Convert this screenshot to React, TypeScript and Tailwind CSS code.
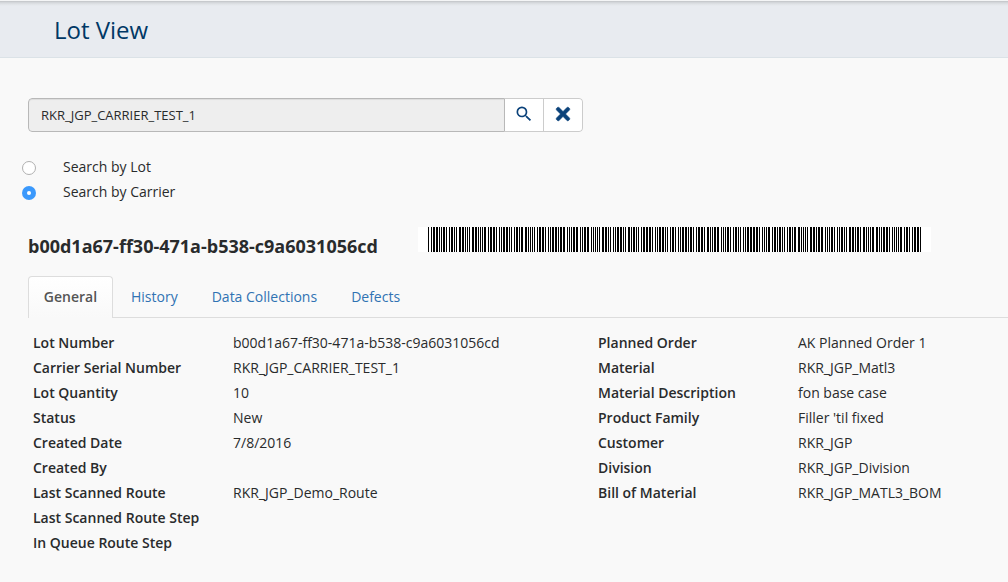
import { useState } from "react";
import { FaTimes } from "react-icons/fa";
import { MdSearch } from "react-icons/md";

const CODE39: Record<string, string> = {
  "0": "nnnwwnwnn",
  "1": "wnnwnnnnw",
  "2": "nnwwnnnnw",
  "3": "wnwwnnnnn",
  "4": "nnnwwnnnw",
  "5": "wnnwwnnnn",
  "6": "nnwwwnnnn",
  "7": "nnnwnnwnw",
  "8": "wnnwnnwnn",
  "9": "nnwwnnwnn",
  A: "wnnnnwnnw",
  B: "nnwnnwnnw",
  C: "wnwnnwnnn",
  D: "nnnnwwnnw",
  E: "wnnnwwnnn",
  F: "nnwnwwnnn",
  "-": "nwnnnnwnw",
  "*": "nwnnwnwnn",
};

function Barcode({ value }: { value: string }) {
  const bars: { x: number; w: number }[] = [];
  let x = 10;
  for (const ch of `*${value.toUpperCase()}*`) {
    CODE39[ch].split("").forEach((size, i) => {
      const w = size === "w" ? 2 : 1;
      if (i % 2 === 0) bars.push({ x, w });
      x += w;
    });
    x += 1;
  }
  return (
    <svg width={x + 9} height={25} className="block shrink-0 bg-white" shapeRendering="crispEdges">
      {bars.map((b) => (
        <rect key={b.x} x={b.x} y={0} width={b.w} height={25} fill="#000" />
      ))}
    </svg>
  );
}

function Radio({ label, checked, onChange }: { label: string; checked: boolean; onChange: () => void }) {
  return (
    <label className="flex h-[25px] items-center">
      <input type="radio" name="search" checked={checked} onChange={onChange} className="peer sr-only" />
      <span
        className={
          checked
            ? "mt-[3px] flex size-[14px] items-center justify-center rounded-full bg-[#3b99fc]"
            : "mt-[3px] size-[14px] rounded-full border border-[#b0b0b0] bg-white"
        }
      >
        {checked && <span className="size-1 rounded-full bg-white" />}
      </span>
      <span className="ml-[27px]">{label}</span>
    </label>
  );
}

type Row = [string, string];

function Details({ rows }: { rows: Row[] }) {
  return (
    <dl className="w-[565px] shrink-0">
      {rows.map(([k, v]) => (
        <div key={k} className="flex h-[25px] items-center whitespace-nowrap">
          <dt className="w-[200px] shrink-0 font-semibold">{k}</dt>
          <dd>{v}</dd>
        </div>
      ))}
    </dl>
  );
}

const LOT = "b00d1a67-ff30-471a-b538-c9a6031056cd";

const LEFT: Row[] = [
  ["Lot Number", LOT],
  ["Carrier Serial Number", "RKR_JGP_CARRIER_TEST_1"],
  ["Lot Quantity", "10"],
  ["Status", "New"],
  ["Created Date", "7/8/2016"],
  ["Created By", ""],
  ["Last Scanned Route", "RKR_JGP_Demo_Route"],
  ["Last Scanned Route Step", ""],
  ["In Queue Route Step", ""],
];

const RIGHT: Row[] = [
  ["Planned Order", "AK Planned Order 1"],
  ["Material", "RKR_JGP_Matl3"],
  ["Material Description", "fon base case"],
  ["Product Family", "Filler 'til fixed"],
  ["Customer", "RKR_JGP"],
  ["Division", "RKR_JGP_Division"],
  ["Bill of Material", "RKR_JGP_MATL3_BOM"],
];

export default function App() {
  const [mode, setMode] = useState("carrier");
  return (
    <div className="h-[582px] w-[1008px] overflow-hidden bg-[#f9f9f9] font-['Open_Sans','Noto_Sans',sans-serif] text-[14px] leading-[20px] text-[#292b2c]">
      <div className="h-px bg-[#f4f5f6]" />
      <header className="flex h-[57px] items-center border-b border-[#dbe2e7] bg-[#e8ebf0] bg-[linear-gradient(to_bottom,#bfc1c4_0px,#cfd2d6_1px,#dfe2e6_3px,#e8ebf0_5px)] pt-[2px] pl-[54px]">
        <h1 className="text-[24px] leading-[32px] text-[#003865]">Lot View</h1>
      </header>

      <div className="mt-[40px] ml-[28px] flex h-[34px] w-[555px] overflow-hidden rounded-[4px]">
        <input
          readOnly
          value="RKR_JGP_CARRIER_TEST_1"
          className="w-[477px] rounded-l-[4px] border border-[#b8b8b8] bg-[#eeeeee] px-3 text-[13px] shadow-[inset_0_1px_1px_rgba(0,0,0,0.075)] outline-none"
        />
        <button aria-label="Search" className="flex w-[39px] items-center justify-center border-y border-r border-[#cccccc] bg-white pb-[2px] text-[#0b427a]">
          <MdSearch size={20} />
        </button>
        <button aria-label="Clear" className="flex w-[39px] items-center justify-center rounded-r-[4px] border-y border-r border-[#cccccc] bg-white pb-[2px] text-[#0b427a]">
          <FaTimes size={20} stroke="currentColor" strokeWidth={12} />
        </button>
      </div>

      <div className="mt-[22px] ml-[22px] flex flex-col">
        <Radio label="Search by Lot" checked={mode === "lot"} onChange={() => setMode("lot")} />
        <Radio label="Search by Carrier" checked={mode === "carrier"} onChange={() => setMode("carrier")} />
      </div>

      <div className="mt-[23px] ml-[28px] flex h-[49px]">
        <h2 className="w-[390px] shrink-0 pt-[7px] text-[18px] leading-[25px] font-bold whitespace-nowrap">{LOT}</h2>
        <Barcode value={LOT} />
      </div>

      <nav className="ml-[28px] flex h-[42px] border-b border-[#dddddd]">
        <a className="-mb-px flex h-[42px] w-[85px] items-center justify-center rounded-t-[4px] border border-b-0 border-[#dddddd] bg-linear-to-b from-white to-[#f9f9f9] pb-[2px] font-semibold text-[#555555]">
          General
        </a>
        <a className="ml-[18px] flex h-[42px] items-center text-[#3073b3]">History</a>
        <a className="ml-[34px] flex h-[42px] items-center text-[#3073b3]">Data Collections</a>
        <a className="ml-[34px] flex h-[42px] items-center text-[#3073b3]">Defects</a>
      </nav>

      <div className="mt-[12px] ml-[33px] flex items-start">
        <Details rows={LEFT} />
        <Details rows={RIGHT} />
      </div>
    </div>
  );
}
